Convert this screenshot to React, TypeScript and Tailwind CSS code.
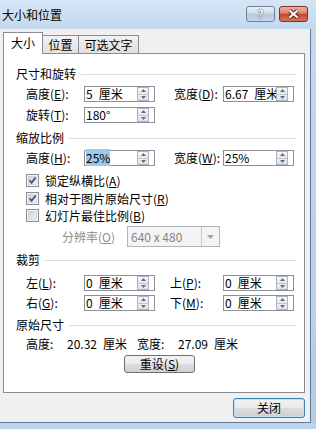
import React from "react";

const font = "font-['Noto_Sans_CJK_SC',sans-serif]";

function Mn({ t, k, colon = true }: { t: string; k: string; colon?: boolean }) {
  return (
    <span className="whitespace-nowrap">
      {t}(<span className="underline underline-offset-1">{k}</span>){colon ? ":" : ""}
    </span>
  );
}

function Tri({ up }: { up?: boolean }) {
  return (
    <svg width="5" height="3" viewBox="0 0 5 3">
      <path d={up ? "M0 3 L2.5 0 L5 3 Z" : "M0 0 L2.5 3 L5 0 Z"} fill="#5b6d92" />
    </svg>
  );
}

function Spin({ value, sel, clip }: { value: string; sel?: boolean; clip?: boolean }) {
  const shown = value.replace(" ", "\u2002");
  return (
    <div className="flex items-center w-[71px] h-[16px] border border-[#8d9195] bg-white">
      <div
        className={`w-[52px] whitespace-nowrap pl-[1px] text-[12px] leading-[14px] ${clip ? "overflow-x-clip" : ""}`}
      >
        {sel ? <span className="bg-[#9fc8ef]">{shown}</span> : shown}
      </div>
      <div className="flex flex-col w-[12px] h-[14px] border border-[#aeb4bd] bg-[#f1f2f4]">
        <div className="flex-1 flex items-center justify-center bg-gradient-to-b from-[#f7f8f9] to-[#e6e8ec] border-b border-[#c3c8cf]">
          <Tri up />
        </div>
        <div className="flex-1 flex items-center justify-center bg-gradient-to-b from-[#eceef1] to-[#dfe2e7]">
          <Tri />
        </div>
      </div>
    </div>
  );
}

function Header({ title, mt }: { title: string; mt: string }) {
  return (
    <div className={`flex items-center h-[14px] pl-[12px] pr-[8px] ${mt}`}>
      <span className="text-[12px] leading-[14px] whitespace-nowrap">{title}</span>
      <div className="flex-1 ml-[5px] h-px bg-[#d5dee5]" />
    </div>
  );
}

function Row({
  l1,
  v1,
  l2,
  v2,
  sel,
  clip2,
  mt,
  rw = "w-[49px]",
  gap = "w-[19px]",
}: {
  l1: React.ReactNode;
  v1: string;
  l2?: React.ReactNode;
  v2?: string;
  sel?: boolean;
  clip2?: boolean;
  mt: string;
  rw?: string;
  gap?: string;
}) {
  return (
    <div className={`flex items-center h-[16px] pl-[22px] text-[12px] leading-[14px] ${mt}`}>
      <div className="w-[58px]">{l1}</div>
      <Spin value={v1} sel={sel} />
      {l2 && (
        <>
          <div className={gap} />
          <div className={rw}>{l2}</div>
          <Spin value={v2 || ""} clip={clip2} />
        </>
      )}
    </div>
  );
}

function Check({ on, label, mt }: { on: boolean; label: React.ReactNode; mt: string }) {
  return (
    <div className={`flex items-center h-[13px] pl-[22px] text-[12px] leading-[14px] ${mt}`}>
      <svg width="13" height="13" viewBox="0 0 13 13">
        <defs>
          <linearGradient id="cbg" x1="0" y1="0" x2="1" y2="1">
            <stop offset="0" stopColor="#cbcfd5" />
            <stop offset="1" stopColor="#f6f6f6" />
          </linearGradient>
        </defs>
        <rect x="0.5" y="0.5" width="12" height="12" fill="#f4f4f4" stroke="#8e8f8f" />
        <rect x="2.5" y="2.5" width="8" height="8" fill="url(#cbg)" stroke="#c5c9d0" strokeWidth="0.6" />
        {on && <path d="M3.5 6.3 L5.6 8.8 L9.6 3.4" fill="none" stroke="#3f4f86" strokeWidth="1.7" />}
      </svg>
      <span className="ml-[6px] whitespace-nowrap">{label}</span>
    </div>
  );
}

const btn =
  "bg-[linear-gradient(to_bottom,#f2f2f2_0%,#ebebeb_50%,#dddddd_50%,#cfcfcf_100%)] rounded-[3px] flex items-center justify-center text-[12px] leading-[14px]";

export default function App() {
  return (
    <div className={`w-[316px] h-[429px] overflow-hidden flex flex-col bg-[#bcd3ea] text-black ${font}`}>
      {/* Title bar */}
      <div className="h-[29px] flex items-center pl-[2px] pr-[8px] bg-gradient-to-b from-[#d6e5f5] to-[#c4d8ee]">
        <span className="text-[12px] leading-[14px]">大小和位置</span>
        <div className="ml-auto flex items-center gap-[4px] -mt-[2px]">
          <div className="w-[29px] h-[16px] rounded-[3px] border border-[#6d7f97] bg-[linear-gradient(to_bottom,#e8eff7_0%,#d3deeb_45%,#b6c7dc_50%,#c9d8ea_100%)] flex items-center justify-center">
            <span className="text-[12px] leading-[12px] font-bold text-white [text-shadow:0_0_1px_#2b3c56,0_0_1px_#2b3c56]">?</span>
          </div>
          <div className="w-[29px] h-[16px] rounded-[3px] border border-[#7f3025] bg-[linear-gradient(to_bottom,#eab0a3_0%,#d88572_45%,#c4452f_50%,#d4735e_100%)] flex items-center justify-center">
            <svg width="13" height="10" viewBox="0 0 13 10">
              <path d="M2.5 1.5 L10.5 8.5 M10.5 1.5 L2.5 8.5" stroke="#5c1a10" strokeWidth="3.8" />
              <path d="M2.5 1.5 L10.5 8.5 M10.5 1.5 L2.5 8.5" stroke="#ffffff" strokeWidth="2.2" />
            </svg>
          </div>
        </div>
      </div>

      <div className="flex">
        {/* Client area */}
        <div className="w-[311px] h-[394px] bg-[#f0f0f0] border-r border-b border-[#5f7a98] flex flex-col pl-[3px] pr-[5px] pt-[3px]">
          {/* Tabs */}
          <div className="flex items-end h-[22px] -mb-px relative z-10">
            <div className="w-[40px] h-[22px] bg-white border border-b-0 border-[#898c95] flex items-center justify-center text-[12px] leading-[14px] relative z-10 pb-[2px]">
              大小
            </div>
            <div className="w-[37px] h-[18px] mb-px -ml-px bg-gradient-to-b from-[#f2f2f2] to-[#e0e0e0] border border-b-0 border-[#898c95] flex items-center justify-center text-[12px] leading-[14px]">
              位置
            </div>
            <div className="w-[61px] h-[18px] mb-px -ml-px bg-gradient-to-b from-[#f2f2f2] to-[#e0e0e0] border border-b-0 border-[#898c95] flex items-center justify-center text-[12px] leading-[14px]">
              可选文字
            </div>
          </div>

          {/* Panel */}
          <div className="w-[302px] h-[340px] bg-white border border-[#898c95] flex flex-col">
            <Header title="尺寸和旋转" mt="mt-[13px]" />
            <Row
              mt="mt-[5px]"
              l1={<Mn t="高度" k="E" />}
              v1="5 厘米"
              l2={<Mn t="宽度" k="D" />}
              v2="6.67 厘米"
              clip2
            />
            <Row mt="mt-[5px]" l1={<Mn t="旋转" k="T" />} v1="180°" />

            <Header title="缩放比例" mt="mt-[8px]" />
            <Row
              mt="mt-[5px]"
              l1={<Mn t="高度" k="H" />}
              v1="25%"
              sel
              l2={<Mn t="宽度" k="W" />}
              v2="25%"
            />
            <Check mt="mt-[8px]" on label={<Mn t="锁定纵横比" k="A" colon={false} />} />
            <Check mt="mt-[5px]" on label={<Mn t="相对于图片原始尺寸" k="R" colon={false} />} />
            <Check mt="mt-[4px]" on={false} label={<Mn t="幻灯片最佳比例" k="B" colon={false} />} />

            <div className="flex items-center h-[21px] mt-[4px] pl-[58px] text-[12px] leading-[14px]">
              <div className="w-[65px] text-[#8d8d8d]">
                <Mn t="分辨率" k="O" colon={false} />
              </div>
              <div className="w-[93px] h-[21px] border border-[#b1b5b9] bg-[#f4f4f4] flex">
                <div className="flex-1 flex items-center pl-[3px] text-[#858585]">640 x 480</div>
                <div className="w-[18px] border-l border-[#c5c8cc] flex items-center justify-center">
                  <svg width="7" height="4" viewBox="0 0 7 4">
                    <path d="M0 0 L3.5 4 L7 0 Z" fill="#a3a3a3" />
                  </svg>
                </div>
              </div>
            </div>

            <Header title="裁剪" mt="mt-[6px]" />
            <Row
              mt="mt-[8px]"
              l1={<Mn t="左" k="L" />}
              v1="0 厘米"
              l2={<Mn t="上" k="P" />}
              v2="0 厘米"
              gap="w-[15px]"
              rw="w-[53px]"
            />
            <Row
              mt="mt-[4px]"
              l1={<Mn t="右" k="G" />}
              v1="0 厘米"
              l2={<Mn t="下" k="M" />}
              v2="0 厘米"
              gap="w-[15px]"
              rw="w-[53px]"
            />

            <Header title="原始尺寸" mt="mt-[7px]" />
            <div className="flex items-center h-[14px] mt-[5px] pl-[22px] text-[12px] leading-[14px] whitespace-nowrap">
              <span className="w-[41px]">高度:</span>
              <span className="w-[70px]">20.32{"\u2002"}厘米</span>
              <span className="w-[41px]">宽度:</span>
              <span>27.09{"\u2002"}厘米</span>
            </div>
            <div className="flex mt-[4px] pl-[120px]">
              <div className={`w-[71px] h-[18px] border border-[#707070] ${btn}`}>
                <Mn t="重设" k="S" colon={false} />
              </div>
            </div>
          </div>

          {/* Bottom buttons */}
          <div className="flex justify-end mt-[5px]">
            <div className={`w-[72px] h-[20px] border border-[#3c7fb1] shadow-[inset_0_0_0_1px_#c3e4f7] ${btn}`}>
              关闭
            </div>
          </div>
        </div>
        <div className="flex-1 bg-gradient-to-b from-[#c5d9ee] to-[#b3cce6]" />
      </div>
    </div>
  );
}
